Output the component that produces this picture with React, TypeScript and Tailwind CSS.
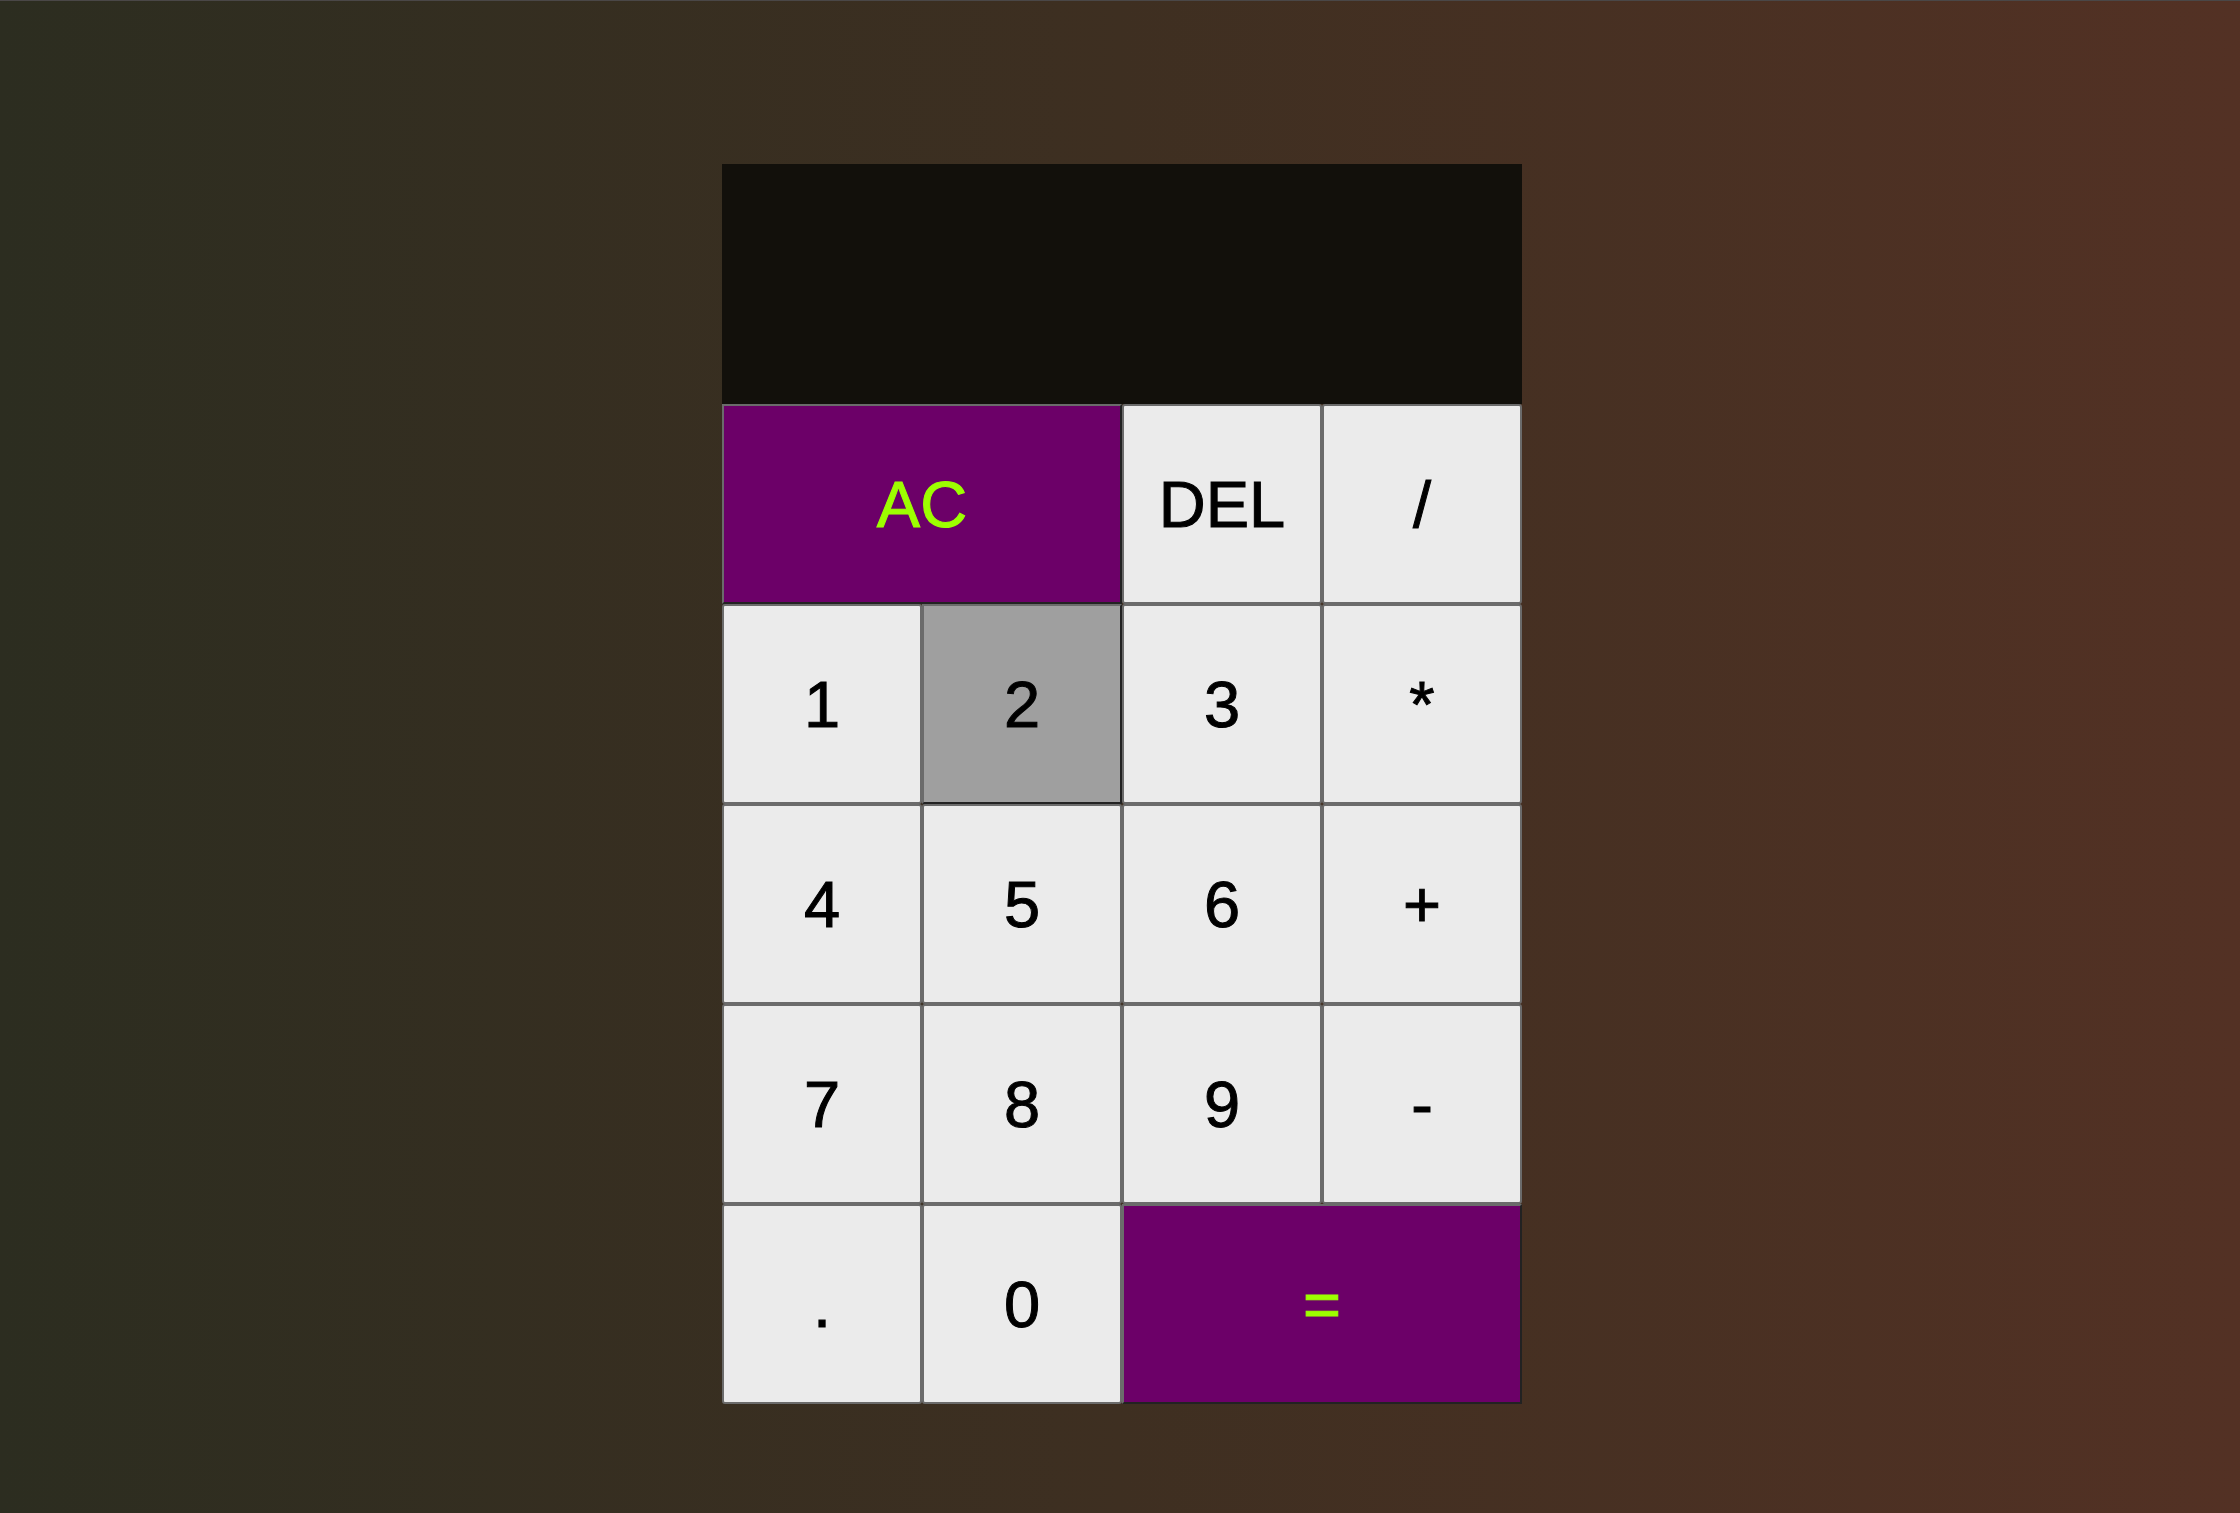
const keys: { label: string; kind: "light" | "accent" | "pressed"; span?: boolean }[] = [
  { label: "AC", kind: "accent", span: true },
  { label: "DEL", kind: "light" },
  { label: "/", kind: "light" },
  { label: "1", kind: "light" },
  { label: "2", kind: "pressed" },
  { label: "3", kind: "light" },
  { label: "*", kind: "light" },
  { label: "4", kind: "light" },
  { label: "5", kind: "light" },
  { label: "6", kind: "light" },
  { label: "+", kind: "light" },
  { label: "7", kind: "light" },
  { label: "8", kind: "light" },
  { label: "9", kind: "light" },
  { label: "-", kind: "light" },
  { label: ".", kind: "light" },
  { label: "0", kind: "light" },
  { label: "=", kind: "accent", span: true },
];

const styles = {
  light: "bg-[#ebebeb] text-black border-2 border-[#6b6b6b] rounded-[3px]",
  accent:
    "bg-[#6c0068] text-[#9dff00] border-2 border-t-[#6b6b6b] border-l-[#6b6b6b] border-b-[#222222] border-r-[#222222]",
  pressed:
    "bg-[#9f9f9f] text-black border-2 border-t-[#6b6b6b] border-l-[#6b6b6b] border-b-[#222222] border-r-[#222222]",
};

export default function App() {
  return (
    <div className="min-h-[1513px] w-full border-t border-[#4a4747] bg-gradient-to-r from-[#2c2d20] via-[#3e2f21] to-[#533124] font-['Liberation_Sans',Arial,sans-serif]">
      <div className="flex justify-center pt-[163px] pl-[4px]">
        <div className="grid w-[800px] grid-cols-4 grid-rows-[240px_repeat(5,200px)]">
          {/* Output */}
          <div className="col-span-4 bg-[#12100b]" />
          {keys.map((k) => (
            <button
              key={k.label}
              className={`flex items-center justify-center text-[65px] leading-none [-webkit-text-stroke:1px] ${
                k.span ? "col-span-2" : ""
              } ${styles[k.kind]}`}
            >
              {k.label}
            </button>
          ))}
        </div>
      </div>
    </div>
  );
}
